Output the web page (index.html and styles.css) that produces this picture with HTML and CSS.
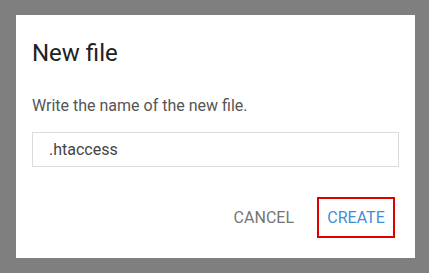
FILE: index.html
```html
<!DOCTYPE html>
<html>
<head>
<meta charset="utf-8">
<link rel="stylesheet" href="styles.css">
</head>
<body>
<div class="dialog">
  <h2 class="title">New file</h2>
  <p class="text">Write the name of the new file.</p>
  <div class="input">.htaccess</div>
  <div class="actions">
    <button class="btn cancel">CANCEL</button>
    <button class="btn create">CREATE</button>
  </div>
</div>
</body>
</html>
```
FILE: styles.css
```css
html, body {
  margin: 0;
  padding: 0;
  background: #7f7f7f;
  width: 429px;
  height: 273px;
  overflow: hidden;
}
body {
  padding: 15px 0 0 16px;
  box-sizing: border-box;
  font-family: Roboto, "Liberation Sans", sans-serif;
}
.dialog {
  width: 399px;
  height: 243px;
  background: #fff;
  box-sizing: border-box;
  padding: 24px 16px 0 16px;
  display: flex;
  flex-direction: column;
}
.title {
  margin: 0;
  font-size: 24px;
  font-weight: 400;
  line-height: 28px;
  color: #222;
}
.text {
  margin: 29px 0 0 0;
  font-size: 16px;
  line-height: 20px;
  color: #555;
}
.input {
  margin-top: 16px;
  height: 35px;
  width: 367px;
  box-sizing: border-box;
  border: 1px solid #dcdcdc;
  padding: 0 16px;
  font-size: 16px;
  line-height: 33px;
  color: #444;
}
.actions {
  display: flex;
  justify-content: flex-end;
  align-items: center;
  gap: 15px;
  margin-top: 30px;
  padding-right: 4px;
}
.btn {
  font-family: Roboto, "Liberation Sans", sans-serif;
  font-size: 16px;
  background: none;
  border: none;
  padding: 0;
  height: 41px;
  cursor: pointer;
}
.cancel {
  color: #757575;
  padding: 0 8px;
}
.create {
  color: #3f8fd6;
  border: 2.5px solid #e00000;
  width: 78px;
}
```
